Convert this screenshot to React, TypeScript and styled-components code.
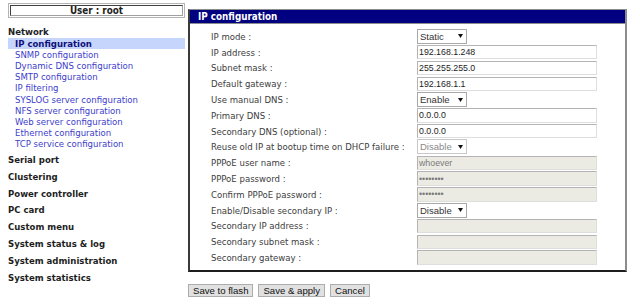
import styled, { createGlobalStyle } from "styled-components";

const UI = `"DejaVu Sans Condensed", "DejaVu Sans", sans-serif`;
const FORM = `"Liberation Sans", Arial, sans-serif`;

const Global = createGlobalStyle`
  html, body { margin: 0; padding: 0; background: #fff; }
  body { width: 640px; height: 306px; overflow: hidden; }
`;

const Page = styled.div`
  display: flex;
  align-items: flex-start;
  padding-left: 8px;
  font-family: ${UI};
  font-stretch: condensed;
`;

const Sidebar = styled.div`
  width: 177px;
  padding-top: 3px;
`;

const UserBox = styled.div`
  border: 1px solid #b4b4b4;
  padding: 1px;
`;

const UserInner = styled.div`
  border: 1px solid;
  border-color: #404040 #a0a0a0 #a0a0a0 #404040;
  text-align: center;
  font-weight: bold;
  font-size: 9.8px;
  line-height: 9px;
  color: #222;
`;

const GroupTitle = styled.div<{ $first?: boolean }>`
  font-weight: bold;
  font-size: 9.5px;
  color: #1e1e1e;
  line-height: ${(p) => (p.$first ? "11.2px" : "16.8px")};
  margin-top: ${(p) => (p.$first ? "8.4px" : "0")};
`;

const SubList = styled.div`
  margin-bottom: 2.3px;
`;

const SubItem = styled.div<{ $active?: boolean }>`
  font-size: 9.5px;
  line-height: 11.2px;
  padding-left: 7px;
  color: ${(p) => (p.$active ? "#10107a" : "#3d3dcc")};
  font-weight: ${(p) => (p.$active ? "bold" : "normal")};
  background: ${(p) => (p.$active ? "#c5d5fb" : "transparent")};
`;

const Main = styled.div`
  margin-left: 3px;
  margin-top: 9px;
`;

const Panel = styled.div`
  width: 439px;
  box-sizing: border-box;
  border-style: solid;
  border-width: 1px 2px 2px 2px;
  border-color: #8c8c8c #8c8c8c #1e1e1e #3a3a3a;
`;

const PanelHeader = styled.div`
  background: #000080;
  height: 13px;
  line-height: 13px;
  border-bottom: 1px solid #8c8c8c;
  padding-left: 8px;
  color: #fff;
  font-weight: bold;
  font-size: 9.8px;
`;

const Form = styled.div`
  padding: 4.5px 0 4.5px 21px;
`;

const Row = styled.div`
  display: grid;
  grid-template-columns: 206px 1fr;
  align-items: center;
  height: 15.8px;
`;

const Label = styled.div`
  font-size: 9.5px;
  color: #404040;
  white-space: nowrap;
`;

const TextField = styled.input`
  box-sizing: border-box;
  width: 180px;
  height: 14.5px;
  margin: 0;
  padding: 0 1px;
  font-family: ${FORM};
  font-size: 8.8px;
  color: ${(p) => (p.disabled ? "#7a7a7a" : "#222")};
  background: ${(p) => (p.disabled ? "#ebebe4" : "#fff")};
  border: 1px solid;
  border-color: #b4b4b4 #dedede #dedede #b4b4b4;
  outline: none;
`;

const SelectBox = styled.div<{ $disabled?: boolean }>`
  box-sizing: border-box;
  width: 50px;
  height: 15px;
  display: flex;
  align-items: center;
  justify-content: space-between;
  padding: 0 3px 0 2px;
  font-family: ${FORM};
  font-size: 9.5px;
  color: ${(p) => (p.$disabled ? "#8a8a8a" : "#333")};
  background: #fff;
  border: 1px solid ${(p) => (p.$disabled ? "#c8c8c8" : "#a9a9a9")};
`;

const Buttons = styled.div`
  display: flex;
  gap: 5px;
  margin-top: 12px;
`;

const Button = styled.button`
  height: 13px;
  padding: 0 4px;
  margin: 0;
  font-family: ${FORM};
  font-size: 9.6px;
  line-height: 11px;
  color: #111;
  background: #e1e1e1;
  border: 1px solid #adadad;
`;

type Field = {
  label: string;
  kind: "text" | "select" | "password";
  value?: string;
  disabled?: boolean;
};

const fields: Field[] = [
  { label: "IP mode :", kind: "select", value: "Static" },
  { label: "IP address :", kind: "text", value: "192.168.1.248" },
  { label: "Subnet mask :", kind: "text", value: "255.255.255.0" },
  { label: "Default gateway :", kind: "text", value: "192.168.1.1" },
  { label: "Use manual DNS :", kind: "select", value: "Enable" },
  { label: "Primary DNS :", kind: "text", value: "0.0.0.0" },
  { label: "Secondary DNS (optional) :", kind: "text", value: "0.0.0.0" },
  { label: "Reuse old IP at bootup time on DHCP failure :", kind: "select", value: "Disable", disabled: true },
  { label: "PPPoE user name :", kind: "text", value: "whoever", disabled: true },
  { label: "PPPoE password :", kind: "password", value: "********", disabled: true },
  { label: "Confirm PPPoE password :", kind: "password", value: "********", disabled: true },
  { label: "Enable/Disable secondary IP :", kind: "select", value: "Disable" },
  { label: "Secondary IP address :", kind: "text", disabled: true },
  { label: "Secondary subnet mask :", kind: "text", disabled: true },
  { label: "Secondary gateway :", kind: "text", disabled: true },
];

const networkItems = [
  "IP configuration",
  "SNMP configuration",
  "Dynamic DNS configuration",
  "SMTP configuration",
  "IP filtering",
  "SYSLOG server configuration",
  "NFS server configuration",
  "Web server configuration",
  "Ethernet configuration",
  "TCP service configuration",
];

const groups = [
  "Serial port",
  "Clustering",
  "Power controller",
  "PC card",
  "Custom menu",
  "System status & log",
  "System administration",
  "System statistics",
];

function Arrow() {
  return (
    <svg width="5" height="4" viewBox="0 0 5 4">
      <path d="M0 0 H5 L2.5 4 Z" fill="#111" />
    </svg>
  );
}

export default function App() {
  return (
    <>
      <Global />
      <Page>
        <Sidebar>
          <UserBox>
            <UserInner>User : root</UserInner>
          </UserBox>
          <GroupTitle $first>Network</GroupTitle>
          <SubList>
            {networkItems.map((item, i) => (
              <SubItem key={item} $active={i === 0}>
                {item}
              </SubItem>
            ))}
          </SubList>
          {groups.map((g) => (
            <GroupTitle key={g}>{g}</GroupTitle>
          ))}
        </Sidebar>
        <Main>
          <Panel>
            <PanelHeader>IP configuration</PanelHeader>
            <Form>
              {fields.map((f) => (
                <Row key={f.label}>
                  <Label>{f.label}</Label>
                  {f.kind === "select" ? (
                    <SelectBox $disabled={f.disabled}>
                      <span>{f.value}</span>
                      <Arrow />
                    </SelectBox>
                  ) : (
                    <TextField
                      type={f.kind}
                      defaultValue={f.value ?? ""}
                      disabled={f.disabled}
                      readOnly
                    />
                  )}
                </Row>
              ))}
            </Form>
          </Panel>
          <Buttons>
            <Button>Save to flash</Button>
            <Button>Save &amp; apply</Button>
            <Button>Cancel</Button>
          </Buttons>
        </Main>
      </Page>
    </>
  );
}
